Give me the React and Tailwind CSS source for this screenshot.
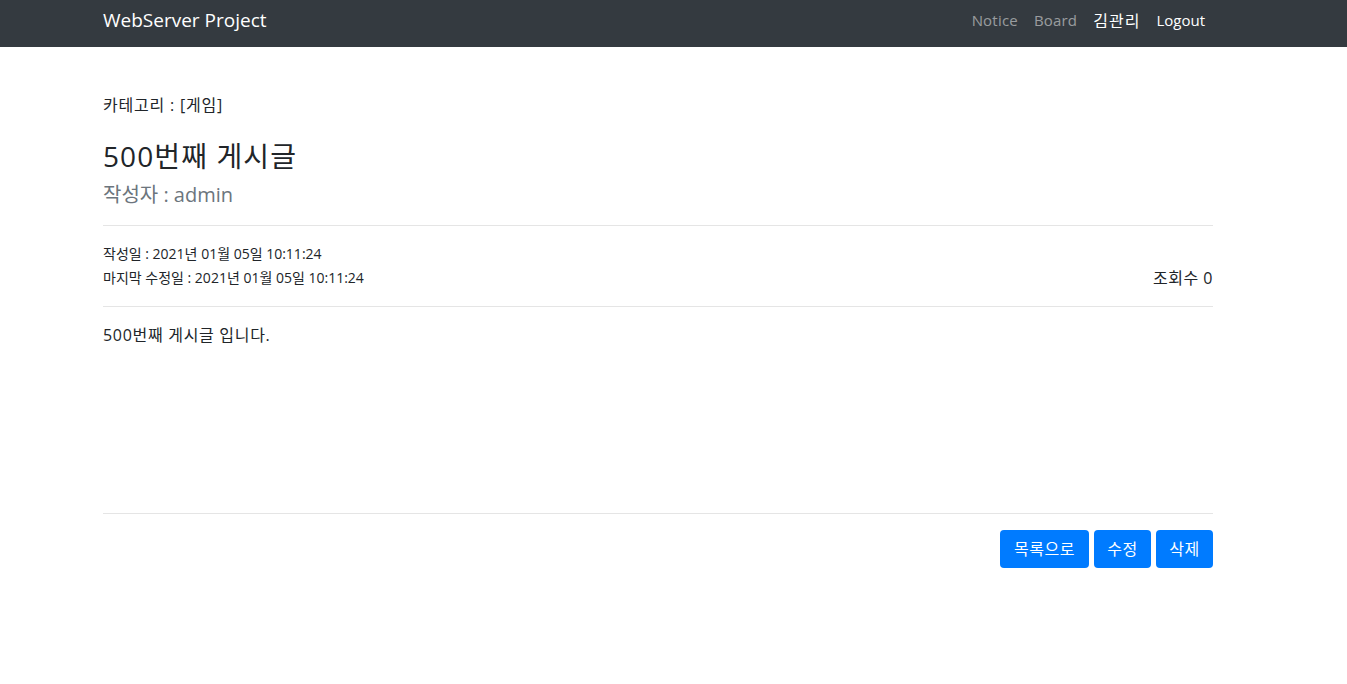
import React from 'react';

const font = { fontFamily: '"Open Sans", "Noto Sans CJK KR", sans-serif' };

const App = () => {
  return (
    <div className="min-h-[684px] bg-white text-[#212529]" style={font}>
      {/* Navbar */}
      <nav className="h-[47px] bg-[#343a40]">
        <div className="ml-[103px] w-[1110px] h-full flex items-center justify-between pb-[6px]">
          <span className="text-[19px] text-white leading-none">WebServer Project</span>
          <div className="flex items-center text-[15px]">
            <span className="px-2 text-white/50 tracking-[0.2px]">Notice</span>
            <span className="px-2 text-white/50 tracking-[0.2px]">Board</span>
            <span className="px-2 text-white text-[16px] tracking-[1px]">김관리</span>
            <span className="px-2 text-white">Logout</span>
          </div>
        </div>
      </nav>

      {/* Post */}
      <div className="ml-[103px] w-[1110px] pt-[46px]">
        <p className="text-[16px] leading-6 tracking-[0.8px]">카테고리 : [게임]</p>
        <h3 className="mt-[22px] text-[28px] leading-[34px] font-normal tracking-[1.1px]">500번째 게시글</h3>
        <h5 className="mt-[10px] text-[20px] leading-6 text-[#6c757d]">작성자 : admin</h5>
        <hr className="mt-[18px] border-t border-black/10" />

        <div className="pt-[16px] pb-[16px] flex items-end justify-between">
          <div className="text-[14px] leading-6">
            <div>작성일 : 2021년 01월 05일 10:11:24</div>
            <div>마지막 수정일 : 2021년 01월 05일 10:11:24</div>
          </div>
          <div className="text-[16px] leading-6 tracking-[0.5px]">조회수 0</div>
        </div>
        <hr className="border-t border-black/10" />

        <p className="mt-[16px] text-[16px] leading-6 h-[190px] tracking-[0.7px]">500번째 게시글 입니다.</p>
        <hr className="border-t border-black/10" />

        <div className="mt-[16px] flex justify-end gap-[5px]">
          <button className="h-[38px] w-[89px] flex items-center justify-center bg-[#007bff] text-white text-[16px] rounded tracking-[0.5px]">목록으로</button>
          <button className="h-[38px] w-[57px] flex items-center justify-center bg-[#007bff] text-white text-[16px] rounded tracking-[0.5px]">수정</button>
          <button className="h-[38px] w-[57px] flex items-center justify-center bg-[#007bff] text-white text-[16px] rounded tracking-[0.5px]">삭제</button>
        </div>
      </div>
    </div>
  );
};

export default App;
